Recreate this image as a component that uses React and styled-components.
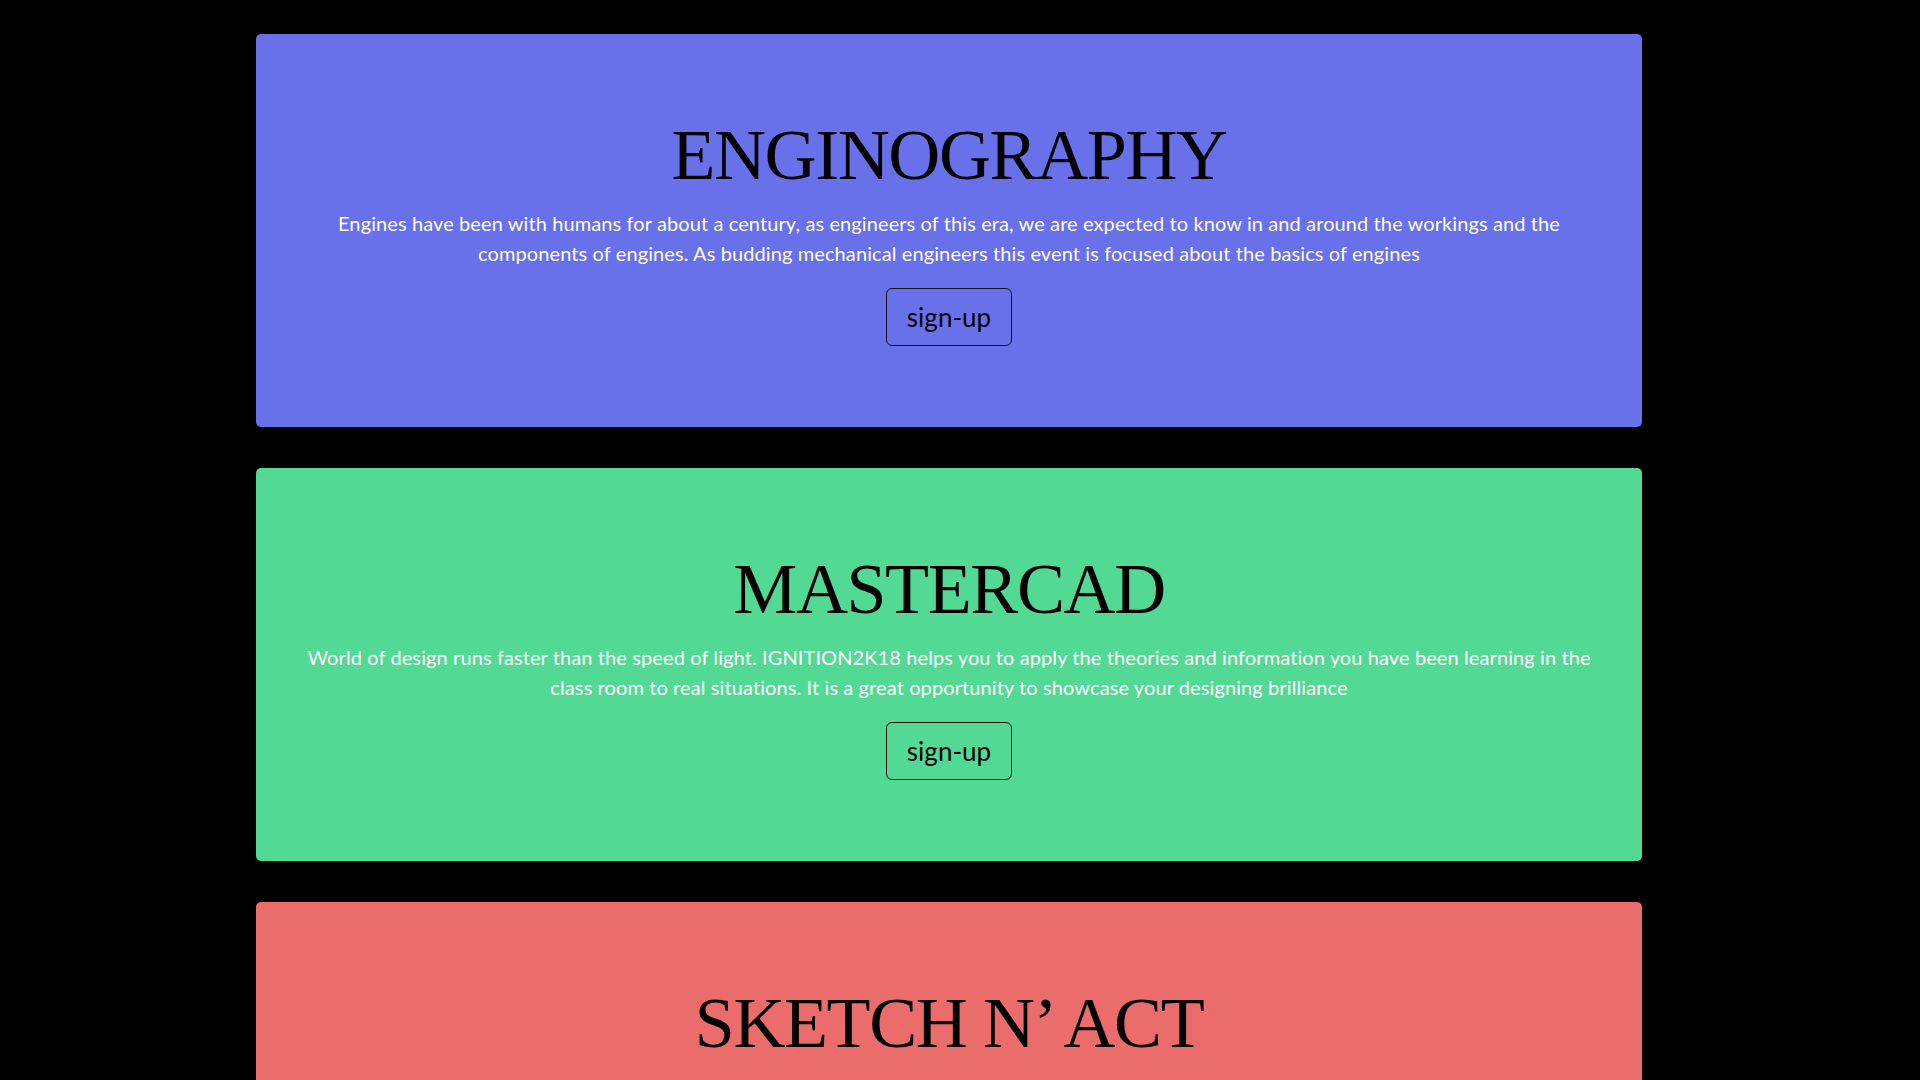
import styled, { createGlobalStyle } from "styled-components";

const events = [
  {
    title: "ENGINOGRAPHY",
    color: "#6870ea",
    text: "Engines have been with humans for about a century, as engineers of this era, we are expected to know in and around the workings and the components of engines. As budding mechanical engineers this event is focused about the basics of engines",
  },
  {
    title: "MASTERCAD",
    color: "#52d993",
    text: "World of design runs faster than the speed of light. IGNITION2K18 helps you to apply the theories and information you have been learning in the class room to real situations. It is a great opportunity to showcase your designing brilliance",
  },
  {
    title: "SKETCH N\u2019 ACT",
    color: "#ea6d6b",
    text: "Sketch what you see and act what you sketch. A fun event where creativity and quick thinking come together to bring ideas to life on paper and on stage",
  },
];

function App() {
  return (
    <>
      <GlobalStyle />
      <Page>
        {events.map((event) => (
          <EventCard key={event.title} color={event.color}>
            <Title>{event.title}</Title>
            <Description>{event.text}</Description>
            <ButtonRow>
              <SignUp type="button">sign-up</SignUp>
            </ButtonRow>
          </EventCard>
        ))}
      </Page>
    </>
  );
}

export default App;

const GlobalStyle = createGlobalStyle`
  html, body {
    margin: 0;
    padding: 0;
    background-color: #000000;
  }
  * {
    box-sizing: border-box;
  }
`;

const Page = styled.div`
  width: 100%;
  min-height: 4730px;
  display: flex;
  flex-direction: column;
  padding-top: 34px;
  background-color: #000000;
`;

const EventCard = styled.section`
  width: 1386px;
  margin: 0 0 41px 256px;
  padding: 64px 48px;
  display: flex;
  flex-direction: column;
  align-items: center;
  border-radius: 5px;
  background-color: ${(props) => props.color};
  text-align: center;
`;

const Title = styled.h1`
  margin: 14px 0 10px;
  font-family: "Liberation Serif", "Times New Roman", serif;
  font-weight: 400;
  font-size: 72px;
  line-height: 86px;
  letter-spacing: -1.4px;
  color: #000000;
`;

const Description = styled.p`
  margin: 0 0 20px;
  font-family: "Lato", "Open Sans", sans-serif;
  font-weight: 400;
  font-size: 20px;
  line-height: 30px;
  letter-spacing: 0.1px;
  color: #ffffff;
`;

const ButtonRow = styled.div`
  display: flex;
  justify-content: center;
  margin-bottom: 17px;
`;

const SignUp = styled.button`
  height: 58px;
  padding: 0 20px;
  display: flex;
  align-items: center;
  justify-content: center;
  background-color: transparent;
  border: 1px solid #111111;
  border-radius: 6px;
  font-family: "Lato", "Open Sans", sans-serif;
  font-weight: 400;
  font-size: 26px;
  color: #000000;
  cursor: pointer;
`;
